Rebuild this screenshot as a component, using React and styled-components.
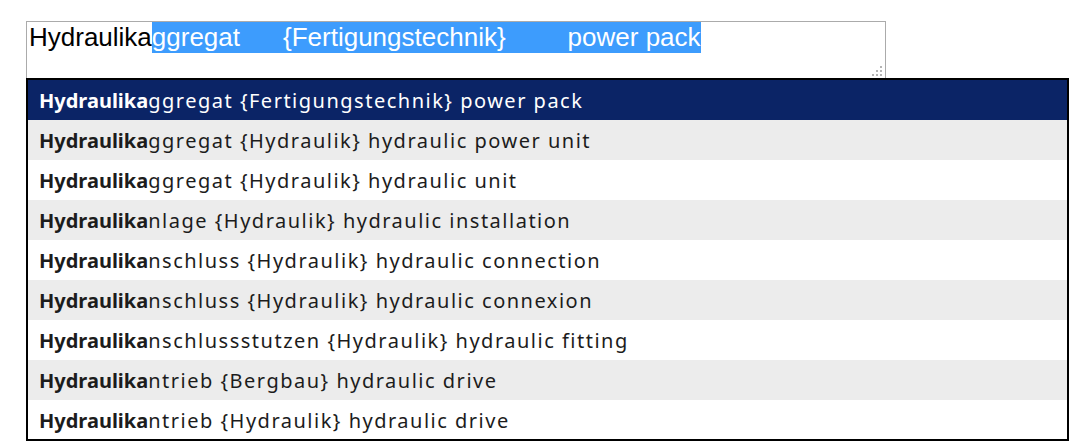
import React from "react";
import styled, { createGlobalStyle } from "styled-components";

const Global = createGlobalStyle`
  html, body { margin: 0; padding: 0; background: #fff; }
  body { overflow: hidden; }
`;

const Page = styled.div`
  padding: 21px 0 0 26px;
  height: 441px;
  box-sizing: border-box;
  display: flex;
  flex-direction: column;
`;

const Field = styled.div`
  position: relative;
  width: 860px;
  height: 57px;
  box-sizing: border-box;
  border: 1px solid #ababab;
  border-bottom: none;
  padding: 0 0 0 2px;
  font-family: "Liberation Sans", Arial, sans-serif;
  font-size: 26px;
  color: #000;
`;

const Line = styled.div`
  display: flex;
  height: 31px;
  align-items: center;
  white-space: pre;
`;

const Selection = styled.span`
  display: flex;
  align-items: center;
  height: 31px;
  background: #3d9cfd;
  color: #fff;
`;

const Gap = styled.span`
  display: inline-block;
  width: ${(p) => p.$w}px;
`;

const Grip = styled.svg`
  position: absolute;
  right: 2px;
  bottom: 1px;
`;

const Dropdown = styled.div`
  width: 1043px;
  height: 363px;
  box-sizing: border-box;
  border: 2px solid #000;
  overflow: hidden;
  font-family: "Noto Sans", "Open Sans", sans-serif;
  font-size: 20px;
`;

const Row = styled.div`
  height: 40px;
  box-sizing: border-box;
  display: flex;
  align-items: center;
  padding: 1px 0 0 11px;
  white-space: pre;
  background: ${(p) => (p.$active ? "#0b2466" : p.$odd ? "#ececec" : "#fff")};
  color: ${(p) => (p.$active ? "#fff" : "#1c1c1c")};
`;

const Match = styled.b`
  font-weight: 700;
`;

const Rest = styled.span`
  letter-spacing: 1.5px;
`;

const items = [
  "ggregat {Fertigungstechnik} power pack",
  "ggregat {Hydraulik} hydraulic power unit",
  "ggregat {Hydraulik} hydraulic unit",
  "nlage {Hydraulik} hydraulic installation",
  "nschluss {Hydraulik} hydraulic connection",
  "nschluss {Hydraulik} hydraulic connexion",
  "nschlussstutzen {Hydraulik} hydraulic fitting",
  "ntrieb {Bergbau} hydraulic drive",
  "ntrieb {Hydraulik} hydraulic drive",
];

export default function App() {
  return (
    <>
      <Global />
      <Page>
        <Field>
          <Line>
            <span>Hydraulika</span>
            <Selection>
              <span>ggregat</span>
              <Gap $w={43} />
              <span>{"{Fertigungstechnik}"}</span>
              <Gap $w={62} />
              <span>power pack</span>
            </Selection>
          </Line>
          <Grip width="12" height="12" viewBox="0 0 12 12">
            <g fill="#b4b4b4">
              <rect x="9" y="1" width="2" height="2" />
              <rect x="5" y="5" width="2" height="2" />
              <rect x="9" y="5" width="2" height="2" />
              <rect x="1" y="9" width="2" height="2" />
              <rect x="5" y="9" width="2" height="2" />
              <rect x="9" y="9" width="2" height="2" />
            </g>
          </Grip>
        </Field>
        <Dropdown>
          {items.map((t, i) => (
            <Row key={i} $active={i === 0} $odd={i % 2 === 1}>
              <Match>Hydraulika</Match>
              <Rest>{t}</Rest>
            </Row>
          ))}
        </Dropdown>
      </Page>
    </>
  );
}
